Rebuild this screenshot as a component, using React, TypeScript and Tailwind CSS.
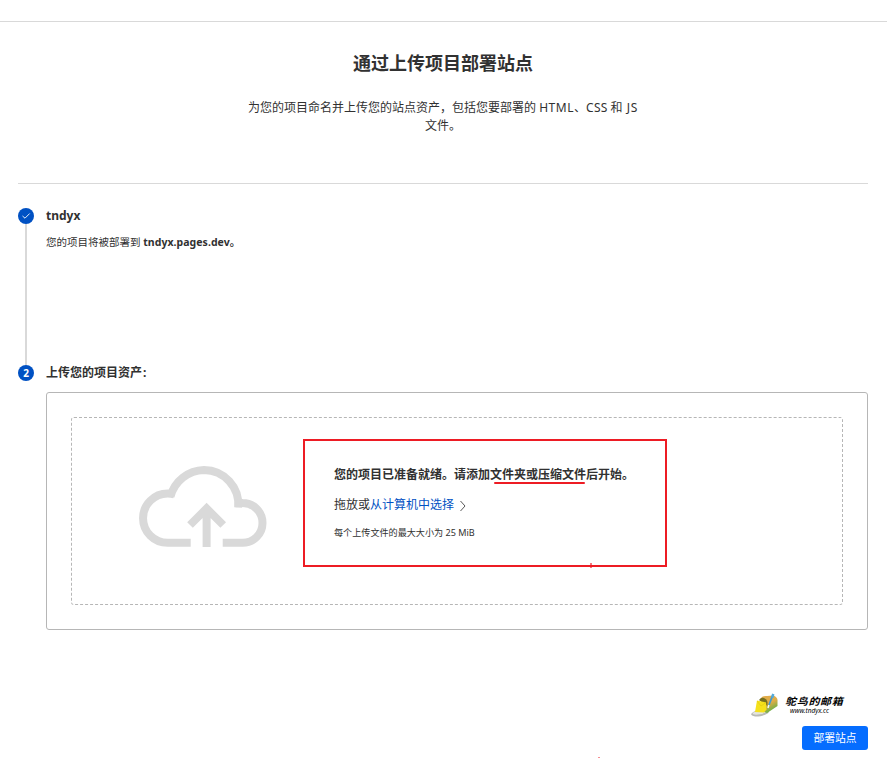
import type { ReactNode } from "react";

function Badge({ children }: { children: ReactNode }) {
  return (
    <div className="flex h-4 w-4 shrink-0 items-center justify-center rounded-full bg-[#0051c3] text-[10px] leading-none font-bold text-white">
      {children}
    </div>
  );
}

function CloudUpload() {
  return (
    <svg width="130" height="84" viewBox="138 464 130 84" fill="none" stroke="#d9d9d9" strokeWidth="8">
      <path d="M190.7 542.8H167.7A24.6 24.6 0 0 1 167.7 493.5Q171 493.5 174.3 494.4" />
      <path d="M170.5 496.5A35.5 35.5 0 0 1 204 470A34.5 34.5 0 0 1 238.2 507.5" />
      <path d="M235.3 503.3Q239 502.8 242.6 503A19.8 19.8 0 0 1 242.6 542.8H222.7" />
      <path d="M206.6 547V508M190 525L206.6 508.5L223.2 525" />
    </svg>
  );
}

function Mailbox() {
  return (
    <svg width="30" height="26" viewBox="0 0 30 26">
      <defs>
        <linearGradient id="box" x1="0" y1="0" x2="0.5" y2="1">
          <stop offset="0" stopColor="#e2ac4c" />
          <stop offset="0.55" stopColor="#e0ad48" />
          <stop offset="1" stopColor="#5fb046" />
        </linearGradient>
      </defs>
      <ellipse cx="10" cy="21" rx="9" ry="3.2" transform="rotate(-10 10 21)" fill="#b9bab5" />
      <ellipse cx="9.5" cy="20.4" rx="7" ry="1.9" transform="rotate(-10 9.5 20.4)" fill="#e3e4df" />
      <path d="M11 6Q13 3.5 17 4L23 3.5Q28 5 27.5 9V14L17 21L12 19Z" fill="url(#box)" />
      <path d="M9 8Q11 5 14 6Q17 7 17.5 10V14L14 12Z" fill="#76701f" />
      <path d="M7 8.5L16 10.5L16.5 17.5L14 20.5L5 20Z" fill="#f5e11b" />
      <path d="M7 9L11 14L16 10.5" fill="none" stroke="#e3cd10" strokeWidth="0.7" />
      <path d="M23 2.5L19 13" stroke="#409bd2" strokeWidth="1.7" />
      <path d="M22 1.5L24.5 2.5L23.4 6L21.2 5.5Z" fill="#54aadb" />
      <path d="M18.8 13L18 16" stroke="#eef7fa" strokeWidth="1.5" />
    </svg>
  );
}

export default function App() {
  return (
    <div className="relative h-[758px] w-[887px] overflow-hidden bg-white pt-[21px] font-['Noto_Sans','Noto_Sans_CJK_SC',sans-serif] text-[12px] leading-[18px] text-[#313131]">
      <div className="border-t border-[#d9d9d9]" />
      <main className="mx-[18px] w-[850px]">
        <header className="flex h-[162px] flex-col items-center border-b border-[#d9d9d9] pt-[29px] text-center">
          <h1 className="text-[18px] leading-6 font-bold">通过上传项目部署站点</h1>
          <p className="mt-6 whitespace-nowrap">
            为您的项目命名并上传您的站点资产，包括您要部署的&nbsp;
            <span className="tracking-[0.55px]">HTML</span>、<span className="tracking-[0.2px]">CSS</span> 和{" "}
            <span className="ml-px tracking-[0.7px]">JS</span>
            <br />
            文件。
          </p>
        </header>

        <section className="flex h-[157px] gap-3 pt-6">
          <div className="flex w-4 flex-col items-center">
            <Badge>
              <svg width="10" height="10" viewBox="0 0 10 10" fill="none" stroke="white" strokeWidth="0.9">
                <path d="M1.5 5L4 7.2L8.7 2.5" />
              </svg>
            </Badge>
            <div className="h-[141px] w-0.5 shrink-0 bg-[#d9d9d9]" />
          </div>
          <div className="-mt-px">
            <h2 className="font-bold">tndyx</h2>
            <p className="mt-2 text-[10.5px] leading-[18px] whitespace-nowrap">
              您的项目将被部署到 <strong className="tracking-[0.05px]">tndyx.pages.dev。</strong>
            </p>
          </div>
        </section>

        <section className="flex gap-3 pt-6">
          <Badge>2</Badge>
          <div className="flex-1">
            <h2 className="-mt-px font-bold">
              上传您的项目资产<span className="ml-px">:</span>
            </h2>
            <div className="mt-[10px] h-[238px] rounded-[3px] border border-[#b6b6b6] p-6">
              <div className="flex h-[188px] rounded-[3px] border border-dashed border-[#b6b6b6] pl-[66px]">
                <div className="w-[196px] pt-[46px]">
                  <CloudUpload />
                </div>
                <div className="pt-[48px] whitespace-nowrap">
                  <p className="font-bold">您的项目已准备就绪。请添加文件夹或压缩文件后开始。</p>
                  <p className="mt-3 flex items-center">
                    拖放或<span className="text-[#0051c3]">从计算机中选择</span>
                    <svg className="mt-0.5 ml-[5px]" width="8" height="12" viewBox="0 0 8 12" fill="none" stroke="#595959">
                      <path d="M1.5 1L6 6L1.5 11" />
                    </svg>
                  </p>
                  <p className="mt-[12px] text-[9.1px] leading-[14px]">每个上传文件的最大大小为 25 MiB</p>
                </div>
              </div>
            </div>
          </div>
        </section>
        <div className="mt-24 flex justify-end">
          <button className="h-6 w-[66px] rounded-[3px] bg-[#056dff] text-[10.8px] leading-6 text-white">部署站点</button>
        </div>
      </main>

      {/* Red markup over the upload area */}
      <div className="absolute top-[439px] left-[303px] h-[128px] w-[364px] border-2 border-[#ed1c24]" />
      <div className="absolute top-[482px] left-[494px] h-0.5 w-[91px] rounded-full bg-[#ed1c24]" />
      <div className="absolute top-[563px] left-[590px] h-[5px] w-0.5 bg-[#ed1c24]/60" />
      <div className="absolute top-[757px] left-[598px] h-px w-0.5 bg-[#ed1c24]/50" />

      {/* Mailbox watermark */}
      <div className="absolute top-[692px] left-[750px] flex gap-[5px]">
        <Mailbox />
        <div className="pt-[2px] whitespace-nowrap text-black italic">
          <div className="origin-left scale-y-90 text-[11px] leading-[13px] font-bold tracking-[0.7px]">鸵鸟的邮箱</div>
          <div className="pl-[5px] text-[6.5px] leading-[7px]">www.tndyx.cc</div>
        </div>
      </div>
    </div>
  );
}
